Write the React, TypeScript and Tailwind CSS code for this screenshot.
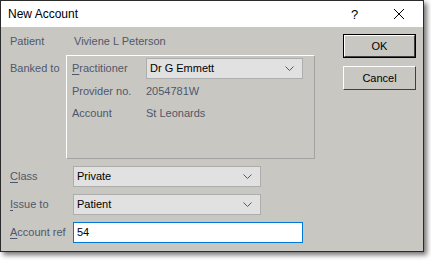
import React from "react";

const font = { fontFamily: '"Liberation Sans", Arial, sans-serif' };

function Chevron() {
    return (
        <svg width="9" height="5" viewBox="0 0 9 5" className="shrink-0">
            <polyline points="0.5,0.5 4.5,4.5 8.5,0.5" fill="none" stroke="#5a5a5a" strokeWidth="1" />
        </svg>
    );
}

function Combo({ value, width }: { value: string; width: string }) {
    return (
        <div className={`${width} h-[21px] bg-[#e1e1e1] border border-[#adadad] flex items-center justify-between pl-[3px] pr-[8px] text-black`}>
            <span>{value}</span>
            <Chevron />
        </div>
    );
}

export default function App() {
    return (
        <div className="w-[431px] h-[260px] bg-white text-[11px] leading-none" style={font}>
            <div className="w-[424px] h-[252px] border border-[#2b2b2b] bg-[#c9c7c2] flex flex-col shadow-[3px_3px_5px_rgba(0,0,0,0.55)]">
                {/* Barra de titulo */}
                <div className="h-[26px] bg-white flex items-center pl-[7px] text-[12px] text-black">
                    <span className="flex-1">New Account</span>
                    <span className="w-[42px] text-[13px]">?</span>
                    <svg width="12" height="12" viewBox="0 0 12 12" className="mr-[18px]">
                        <path d="M1 1 L11 11 M11 1 L1 11" stroke="#000" strokeWidth="1" />
                    </svg>
                </div>

                <div className="flex-1 flex">
                    {/* Columna izquierda */}
                    <div className="flex flex-col pl-[9px] text-[#4e586c]">
                        <div className="h-[20px] mt-[4px] flex items-center">
                            <span className="w-[64px]">Patient</span>
                            <span>Viviene L Peterson</span>
                        </div>

                        <div className="flex mt-[4px]">
                            <span className="w-[56px] h-[20px] mt-[3px] flex items-center">Banked to</span>
                            <div className="w-[249px] h-[104px] border-t border-l border-t-white border-l-white border-r border-b border-r-[#a3a3a3] border-b-[#a3a3a3] pl-[5px] pt-[2px] flex flex-col">
                                <div className="flex items-center h-[21px]">
                                    <span className="w-[74px]">
                                        <span className="underline underline-offset-2">P</span>ractitioner
                                    </span>
                                    <Combo value="Dr G Emmett" width="w-[157px]" />
                                </div>
                                <div className="flex items-center h-[21px] mt-[2px]">
                                    <span className="w-[74px]">Provider no.</span>
                                    <span>2054781W</span>
                                </div>
                                <div className="flex items-center h-[21px] mt-[1px]">
                                    <span className="w-[74px]">Account</span>
                                    <span>St Leonards</span>
                                </div>
                            </div>
                        </div>

                        <div className="flex items-center mt-[7px]">
                            <span className="w-[63px]">
                                <span className="underline underline-offset-2">C</span>lass
                            </span>
                            <Combo value="Private" width="w-[188px]" />
                        </div>
                        <div className="flex items-center mt-[7px]">
                            <span className="w-[63px]">
                                <span className="underline underline-offset-2">I</span>ssue to
                            </span>
                            <Combo value="Patient" width="w-[188px]" />
                        </div>
                        <div className="flex items-center mt-[7px]">
                            <span className="w-[63px]">
                                <span className="underline underline-offset-2">A</span>ccount ref
                            </span>
                            <div className="w-[230px] h-[21px] bg-white border border-[#0078d7] flex items-center pl-[3px] text-black">54</div>
                        </div>
                    </div>

                    {/* Botones */}
                    <div className="flex flex-col pl-[28px] pt-[7px] gap-[8px] text-black">
                        <div className="w-[73px] h-[24px] border border-black">
                            <div className="h-full border-t border-l border-t-white border-l-white border-r border-b border-r-[#404040] border-b-[#404040] flex items-center justify-center">OK</div>
                        </div>
                        <div className="w-[73px] h-[24px] border-t border-l border-t-white border-l-white border-r border-b border-r-[#404040] border-b-[#404040] flex items-center justify-center">Cancel</div>
                    </div>
                </div>
            </div>
        </div>
    );
}
